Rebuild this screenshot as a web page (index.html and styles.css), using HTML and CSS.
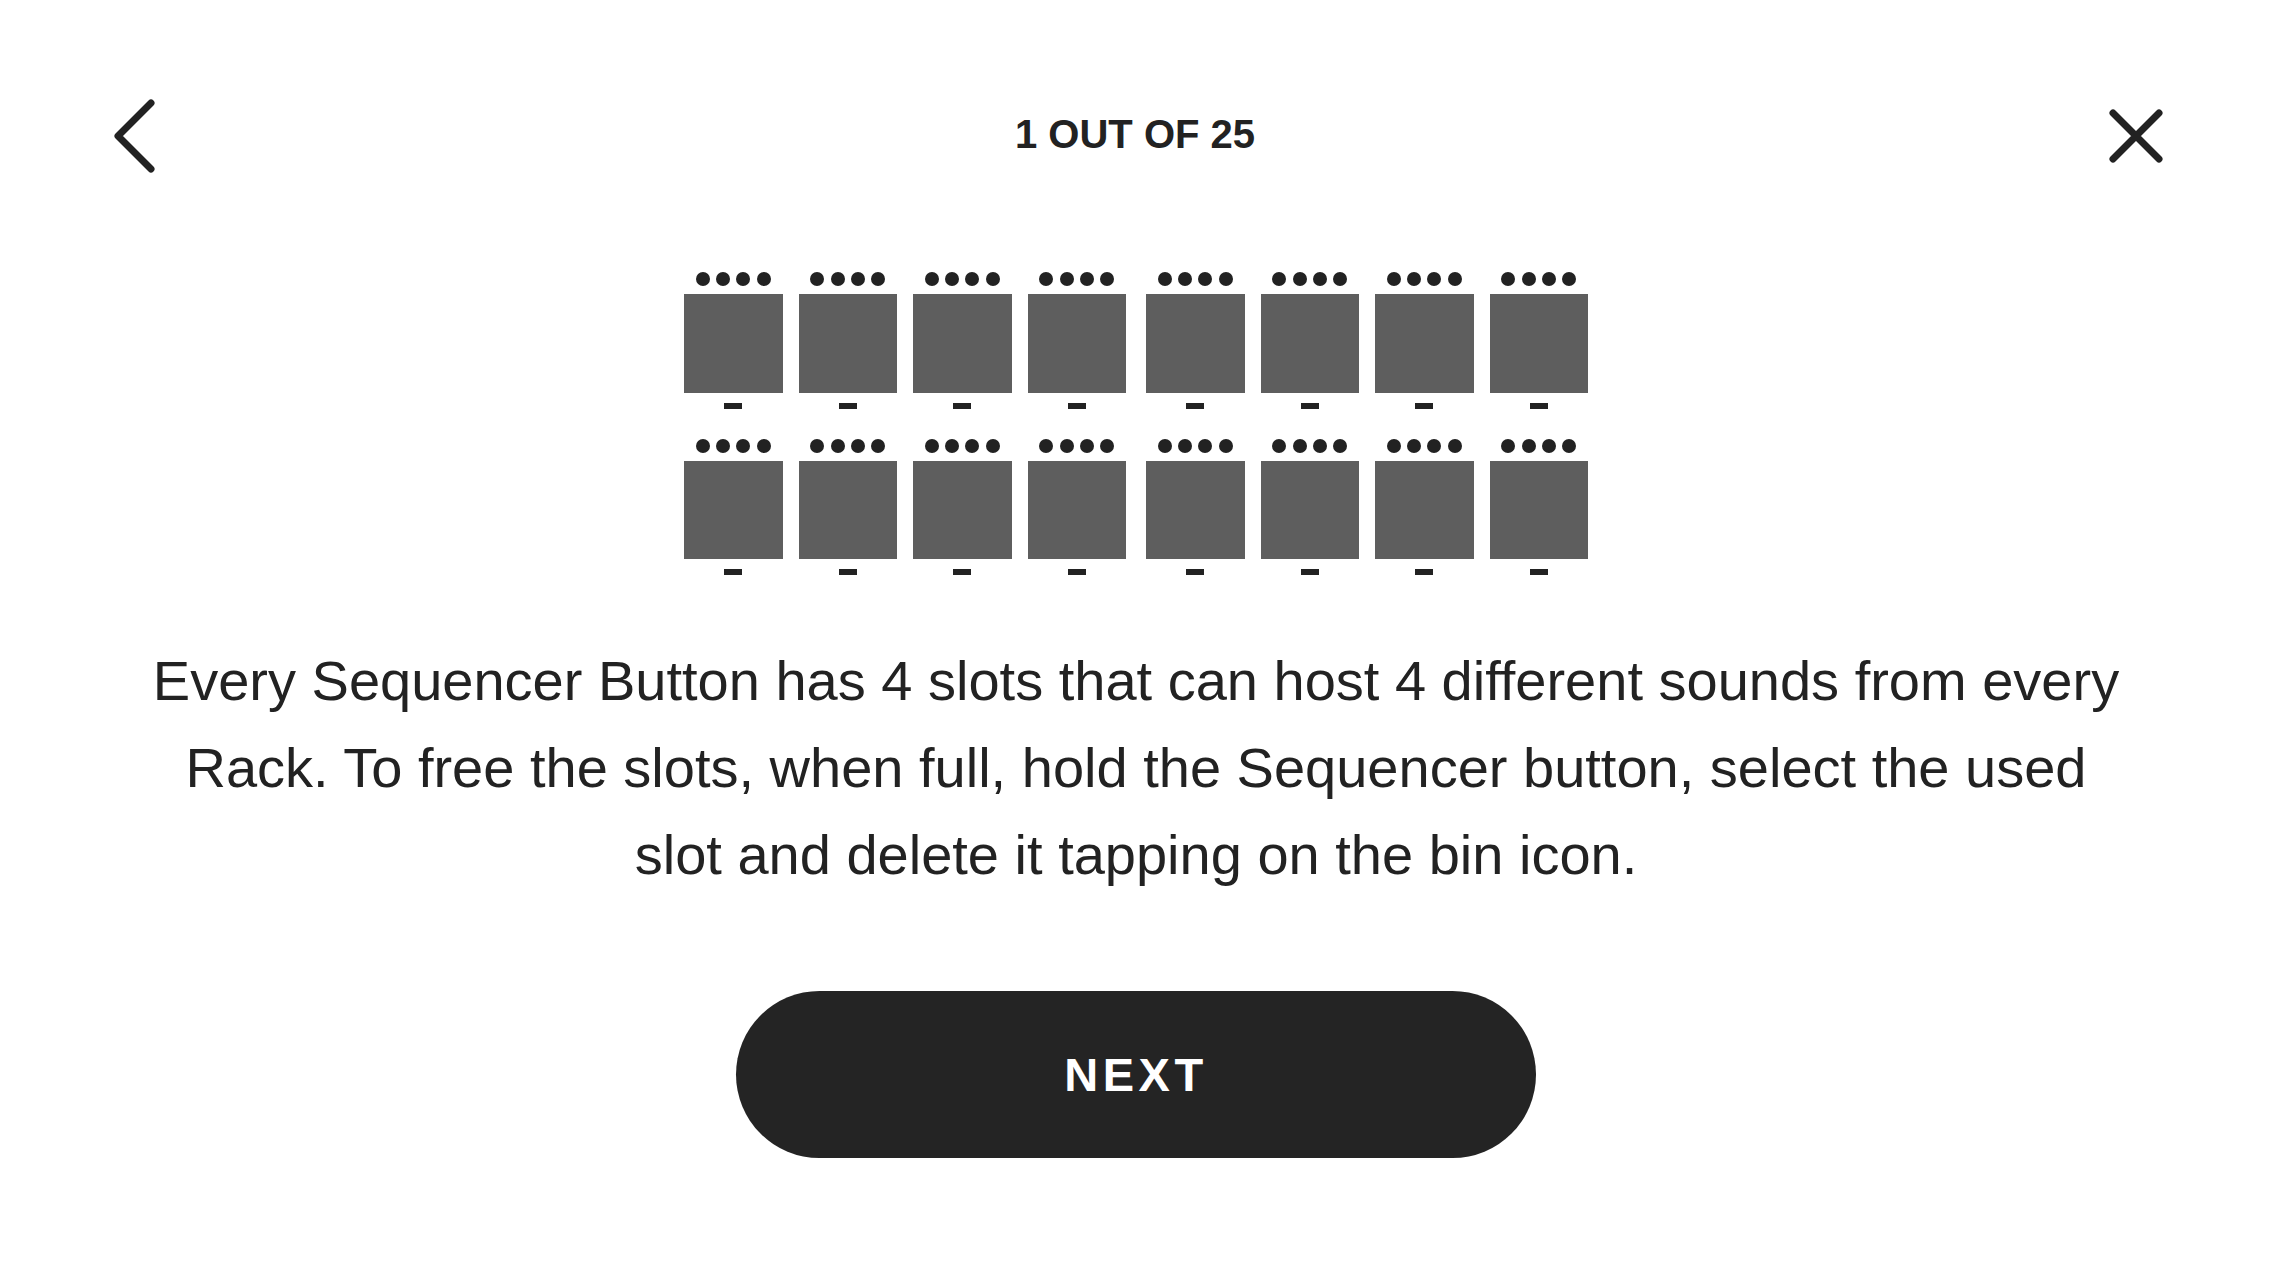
FILE: index.html
```html
<!DOCTYPE html>
<html lang="en">
<head>
    <meta charset="UTF-8">
    <meta name="viewport" content="width=device-width, initial-scale=1.0">
    <title>Tutorial</title>
    <link rel="stylesheet" href="styles.css">
</head>
<body>
    <div class="screen">
        <div class="topbar">
            <button class="icon-btn back" aria-label="Back">
                <svg width="64" height="80" viewBox="0 0 64 80"><path d="M51 9 L18 42 L51 75" fill="none" stroke="#222" stroke-width="7" stroke-linecap="round" stroke-linejoin="round"/></svg>
            </button>
            <div class="counter">1 OUT OF 25</div>
            <button class="icon-btn close" aria-label="Close">
                <svg width="72" height="80" viewBox="0 0 72 80"><path d="M13 19 L59 65 M59 19 L13 65" fill="none" stroke="#222" stroke-width="7" stroke-linecap="round"/></svg>
            </button>
        </div>

        <div class="pads">
            <div class="pad-row">
                <div class="pad-group">
                    <div class="pad"><div class="slots"><i></i><i></i><i></i><i></i></div><div class="key"></div><div class="mark"></div></div>
                    <div class="pad"><div class="slots"><i></i><i></i><i></i><i></i></div><div class="key"></div><div class="mark"></div></div>
                    <div class="pad"><div class="slots"><i></i><i></i><i></i><i></i></div><div class="key"></div><div class="mark"></div></div>
                    <div class="pad"><div class="slots"><i></i><i></i><i></i><i></i></div><div class="key"></div><div class="mark"></div></div>
                </div>
                <div class="pad-group">
                    <div class="pad"><div class="slots"><i></i><i></i><i></i><i></i></div><div class="key"></div><div class="mark"></div></div>
                    <div class="pad"><div class="slots"><i></i><i></i><i></i><i></i></div><div class="key"></div><div class="mark"></div></div>
                    <div class="pad"><div class="slots"><i></i><i></i><i></i><i></i></div><div class="key"></div><div class="mark"></div></div>
                    <div class="pad"><div class="slots"><i></i><i></i><i></i><i></i></div><div class="key"></div><div class="mark"></div></div>
                </div>
            </div>
            <div class="pad-row">
                <div class="pad-group">
                    <div class="pad"><div class="slots"><i></i><i></i><i></i><i></i></div><div class="key"></div><div class="mark"></div></div>
                    <div class="pad"><div class="slots"><i></i><i></i><i></i><i></i></div><div class="key"></div><div class="mark"></div></div>
                    <div class="pad"><div class="slots"><i></i><i></i><i></i><i></i></div><div class="key"></div><div class="mark"></div></div>
                    <div class="pad"><div class="slots"><i></i><i></i><i></i><i></i></div><div class="key"></div><div class="mark"></div></div>
                </div>
                <div class="pad-group">
                    <div class="pad"><div class="slots"><i></i><i></i><i></i><i></i></div><div class="key"></div><div class="mark"></div></div>
                    <div class="pad"><div class="slots"><i></i><i></i><i></i><i></i></div><div class="key"></div><div class="mark"></div></div>
                    <div class="pad"><div class="slots"><i></i><i></i><i></i><i></i></div><div class="key"></div><div class="mark"></div></div>
                    <div class="pad"><div class="slots"><i></i><i></i><i></i><i></i></div><div class="key"></div><div class="mark"></div></div>
                </div>
            </div>
        </div>

        <p class="description">Every Sequencer Button has 4 slots that can host 4 different sounds from every Rack. To free the slots, when full, hold the Sequencer button, select the used slot and delete it tapping on the bin icon.</p>

        <button class="next-btn">NEXT</button>
    </div>
</body>
</html>
```

FILE: styles.css
```css
* {
    box-sizing: border-box;
}

body {
    margin: 0;
    background: #fff;
    color: #222;
    font-family: "Liberation Sans", Arial, sans-serif;
}

.screen {
    display: flex;
    flex-direction: column;
    align-items: center;
    height: 1280px;
    overflow: hidden;
}

.topbar {
    display: grid;
    grid-template-columns: 1fr auto 1fr;
    align-items: center;
    width: 100%;
    height: 80px;
    margin-top: 94px;
    padding: 0 100px;
}

.icon-btn {
    display: flex;
    padding: 0;
    border: none;
    background: none;
}

.back {
    justify-self: start;
}

.close {
    justify-self: end;
}

.counter {
    font-size: 40px;
    font-weight: bold;
    line-height: 80px;
    margin-right: 2px;
}

.pads {
    display: flex;
    flex-direction: column;
    gap: 30px;
    margin-top: 98px;
}

.pad-row {
    display: flex;
    gap: 20px;
}

.pad-group {
    display: flex;
    gap: 16px;
}

.pad {
    display: flex;
    flex-direction: column;
    align-items: center;
    width: 98.5px;
}

.slots {
    display: flex;
    gap: 6.2px;
    height: 14px;
}

.slots i {
    width: 14px;
    height: 14px;
    border-radius: 50%;
    background: #222;
}

.key {
    width: 98.5px;
    height: 98.5px;
    margin-top: 8px;
    background: #5e5e5e;
}

.mark {
    width: 18px;
    height: 6px;
    margin-top: 10px;
    background: #222;
}

.description {
    max-width: 1990px;
    margin: 62px 0 0;
    font-size: 56px;
    line-height: 87px;
    text-align: center;
}

.next-btn {
    width: 800px;
    height: 167px;
    margin-top: 93px;
    border: none;
    border-radius: 84px;
    background: #242424;
    color: #fff;
    font-family: "Liberation Sans", Arial, sans-serif;
    font-size: 47px;
    font-weight: bold;
    letter-spacing: 4.5px;
}
```
